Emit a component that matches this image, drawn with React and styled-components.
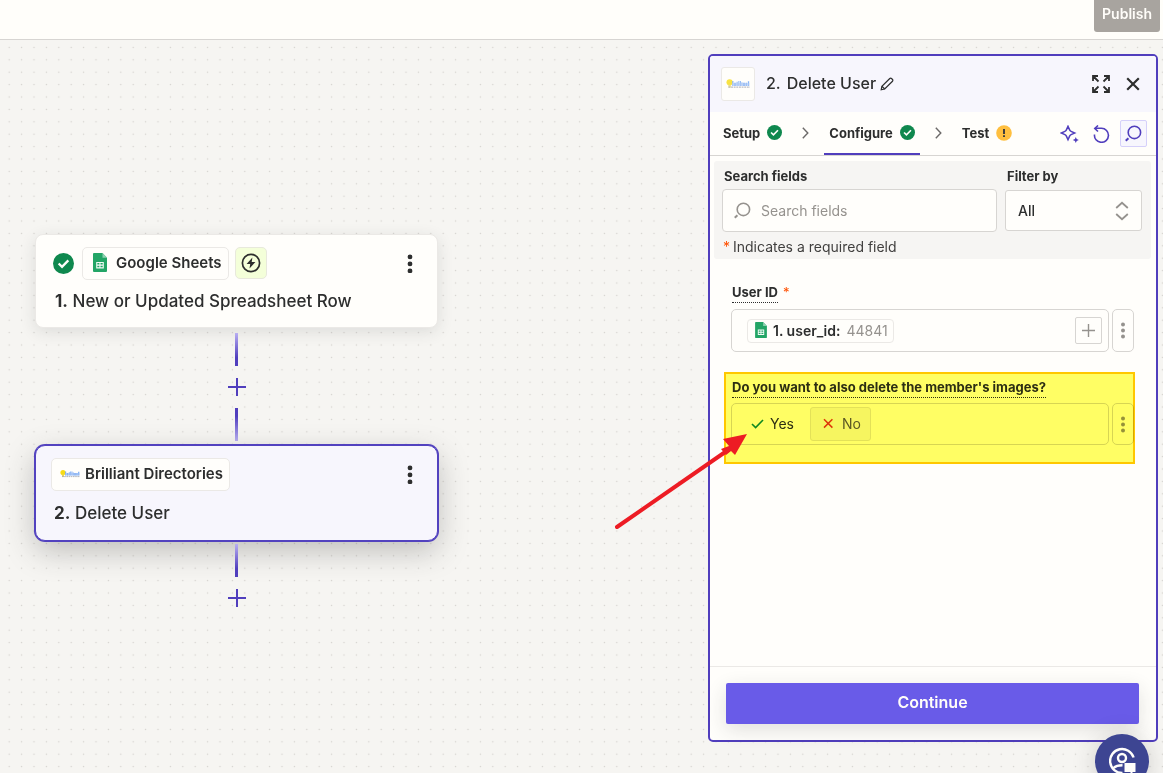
import styled, { createGlobalStyle, css } from 'styled-components'

const GlobalStyle = createGlobalStyle`
  * {
    box-sizing: border-box;
  }
  body {
    margin: 0;
    background: #f6f5f2;
    color: #2d2e2e;
    font-family: Inter, Arial, Helvetica, sans-serif;
    font-size: 14px;
  }
  button, input, select {
    font-family: inherit;
    color: inherit;
    margin: 0;
  }
`

const Page = styled.div`
  position: relative;
  display: flex;
  flex-direction: column;
  height: 100vh;
  min-height: 600px;
  overflow: hidden;
`

const TopBar = styled.header`
  position: relative;
  display: flex;
  justify-content: flex-end;
  align-items: flex-start;
  flex: none;
  height: 40px;
  padding-right: 3px;
  background: #fffefa;
  border-bottom: 1px solid #d7d5d2;
`

const PublishButton = styled.button`
  height: 32px;
  padding: 0 8px 5px;
  border: none;
  border-radius: 0 0 3px 3px;
  background: #a8a49f;
  color: #fffdf9;
  font-size: 14px;
  font-weight: 600;
`

const Dots = styled.svg`
  position: absolute;
  inset: 0;
  width: 100%;
  height: 100%;
`

const Canvas = styled.main`
  position: relative;
  display: flex;
  flex: 1;
  justify-content: space-between;
  min-height: 0;
  padding: 14px 5px 31px 35px;
`

const Flow = styled.section`
  display: flex;
  flex-direction: column;
  align-items: center;
  flex: 0 1 403px;
  padding-top: 180px;
`

const StepCard = styled.article`
  display: flex;
  flex-direction: column;
  gap: 8px;
  width: 100%;
  padding: 12px 15px 13px 16px;
  border: 1px solid #ebe9e6;
  border-radius: 8px;
  background: #fffefb;
  box-shadow: 0 4px 16px rgba(45, 46, 46, 0.12);
  ${({ $selected }) =>
    $selected &&
    css`
      gap: 9px;
      padding: 12px 15px 14px;
      border-color: #5242bf;
      border-radius: 10px;
      background: #f7f6fd;
      box-shadow: 0 0 0 1px #5242bf, 0 10px 30px rgba(45, 46, 46, 0.28);
    `}
`

const StepTop = styled.div`
  display: flex;
  align-items: center;
  gap: 6px;
`

const AppChip = styled.span`
  display: flex;
  align-items: center;
  gap: ${({ $gap }) => $gap}px;
  height: 33px;
  padding: 0 6px 2px ${({ $start }) => $start}px;
  border: 1px solid #ebe9e6;
  border-radius: 5px;
  background: #fffefb;
  font-size: 15px;
  font-weight: 600;
`

const TriggerChip = styled.span`
  display: grid;
  place-items: center;
  align-self: flex-start;
  width: 32px;
  height: 32px;
  border: 1px solid #e8e9dc;
  border-radius: 5px;
  background: #f4ffd9;
`

const StatusSlot = styled.span`
  display: flex;
  padding: 0 2px 0 1px;
`

const StepTitle = styled.h2`
  margin: 0;
  padding-left: 3px;
  font-size: 17px;
  font-weight: 500;
  line-height: 26px;
  b {
    font-weight: 700;
  }
`

const GhostButton = styled.button`
  display: grid;
  place-items: center;
  width: ${({ $size = 24 }) => $size}px;
  height: ${({ $size = 24 }) => $size}px;
  padding: 0;
  border: 1px solid ${({ $framed }) => ($framed ? '#d5d0fa' : 'transparent')};
  border-radius: 2px;
  background: ${({ $framed }) => ($framed ? '#f7f6fd' : 'none')};
  color: ${({ $accent }) => ($accent ? '#503ebd' : '#2d2e2e')};
`

const PushRight = styled.div`
  display: flex;
  align-items: center;
  gap: ${({ $gap = 0 }) => $gap}px;
  margin-left: auto;
`

const Line = styled.span`
  width: 3px;
  height: 33px;
  background: linear-gradient(
    ${({ $up }) => ($up ? 'to top' : 'to bottom')},
    #b9aff3,
    #503ebd 75%
  );
`

const Connector = styled.div`
  display: flex;
  flex-direction: column;
  align-items: center;
  gap: 9px;
  padding: ${({ $last }) => ($last ? '3px 0 0' : '5px 0 4px')};
`

const Panel = styled.aside`
  display: flex;
  flex-direction: column;
  flex: 0 0 450px;
  min-width: 0;
  border: 2px solid #503ebd;
  border-radius: 5px;
  background: #fffefb;
`

const PanelHeader = styled.header`
  display: flex;
  align-items: center;
  height: 56px;
  padding: 0 11px;
  border-radius: 3px 3px 0 0;
  background: #f7f6fd;
`

const LogoTile = styled.span`
  display: grid;
  place-items: center;
  width: 34px;
  height: 34px;
  margin-right: 11px;
  border: 1px solid #ebe9e6;
  border-radius: 3px;
  background: #fffefb;
`

const PanelTitle = styled.h1`
  display: flex;
  gap: 6px;
  margin: 0 4px 0 0;
  padding-bottom: 3px;
  font-size: 16px;
  font-weight: 500;
`

const Tabs = styled.nav`
  display: flex;
  align-items: stretch;
  height: 44px;
  padding: 0 9px 0 8px;
  border-bottom: 1px solid #d7d5d2;
`

const Tab = styled.button`
  display: flex;
  align-items: center;
  gap: 7px;
  padding: 0 5px 2px;
  border: none;
  background: none;
  font-size: 13px;
  font-weight: 700;
  box-shadow: ${({ $active }) => ($active ? 'inset 0 -2px #503ebd' : 'none')};
`

const TabArrow = styled.span`
  display: grid;
  place-items: center;
  width: 37px;
  padding-bottom: 2px;
`

const Filters = styled.section`
  display: grid;
  grid-template-columns: minmax(0, 1fr) 137px;
  column-gap: 8px;
  margin: 5px 5px 0 4px;
  padding: 4px 9px 0 8px;
  border-radius: 3px;
  background: #f6f5f3;
`

const FilterLabel = styled.label`
  padding: 0 0 2px 2px;
  font-size: 13px;
  font-weight: 700;
  line-height: 22px;
`

const SearchBox = styled.div`
  display: flex;
  align-items: center;
  gap: 10px;
  height: 43px;
  padding: 0 11px;
  border: 1px solid #d7d5d2;
  border-radius: 4px;
  background: #fffefb;
  color: #95928e;
`

const TextInput = styled.input`
  flex: 1;
  min-width: 0;
  height: 100%;
  padding: 0;
  border: none;
  outline: none;
  background: transparent;
  font-size: 14px;
  &::placeholder {
    color: #95928e;
    opacity: 1;
  }
`

const SelectBox = styled.div`
  display: grid;
  align-items: center;
  align-self: center;
  height: 41px;
  color: #95928e;
  > * {
    grid-area: 1 / 1;
  }
  > svg {
    justify-self: end;
    margin-right: 13px;
    pointer-events: none;
  }
`

const Select = styled.select`
  appearance: none;
  width: 100%;
  height: 100%;
  padding: 0 12px;
  border: 1px solid #d7d5d2;
  border-radius: 3px;
  background: #fffefb;
  color: #2d2e2e;
  font-size: 14px;
  font-weight: 500;
`

const Note = styled.p`
  grid-column: 1 / -1;
  margin: 0;
  padding: 3px 0 0 1px;
  color: #403f3e;
  font-size: 14px;
  line-height: 24px;
`

const Star = styled.span`
  color: #ff4f00;
  margin-right: ${({ $lead }) => ($lead ? 3 : 0)}px;
`

const Fields = styled.div`
  flex: 1;
  padding: 21px 22px 0 21px;
`

const Field = styled.div`
  position: relative;
  margin-bottom: 23px;
`

const FieldHead = styled.div`
  display: flex;
  gap: 5px;
  height: ${({ $short }) => ($short ? 28 : 29)}px;
  padding: 3px 0 0 1px;
  font-size: 13px;
  line-height: 18px;
`

const FieldLabel = styled.label`
  height: 20px;
  border-bottom: 1px dotted #2d2e2e;
  font-weight: 700;
`

const FieldRow = styled.div`
  display: flex;
  gap: 3px;
`

const FieldBox = styled.div`
  display: flex;
  align-items: center;
  flex: 1;
  min-width: 0;
  gap: ${({ $gap }) => $gap}px;
  height: ${({ $choices }) => ($choices ? 42 : 43)}px;
  padding: ${({ $choices }) => ($choices ? '0 8px' : '0 6px 0 15px')};
  border: 1px solid #d7d5d2;
  border-radius: 5px;
`

const Pill = styled.span`
  display: flex;
  align-items: center;
  flex: none;
  gap: 6px;
  height: 24px;
  padding: 0 5px 1px 7px;
  border: 1px solid #ebe9e6;
  border-radius: 4px;
  color: #95928e;
  font-size: 14px;
  b {
    color: #2d2e2e;
    font-weight: 600;
  }
`

const AddButton = styled.button`
  display: grid;
  place-items: center;
  flex: none;
  width: 27px;
  height: 27px;
  padding: 0;
  border: 1px solid #d7d5d2;
  border-radius: 2px;
  background: none;
  color: #95928e;
`

const MoreButton = styled.button`
  display: grid;
  place-items: center;
  flex: none;
  width: 22px;
  padding: 0;
  border: 1px solid #d7d5d2;
  border-radius: 5px;
  background: none;
  color: #95928e;
`

const Choice = styled.button`
  display: flex;
  align-items: center;
  gap: 6px;
  height: 34px;
  padding: 0 9px 1px;
  border: 1px solid ${({ $chosen }) => ($chosen ? '#e3e1dd' : 'transparent')};
  border-radius: 3px;
  background: ${({ $chosen }) => ($chosen ? '#f6f5f3' : 'none')};
  color: ${({ $chosen }) => ($chosen ? '#5c5958' : '#2d2e2e')};
  font-size: 14px;
`

const Highlight = styled.div`
  position: absolute;
  inset: -3px -1px -19px -7px;
  border: 2px solid #ffc800;
  background: #ffff65;
  mix-blend-mode: multiply;
  pointer-events: none;
`

const Pointer = styled.svg`
  position: absolute;
  left: -118px;
  top: 56px;
  pointer-events: none;
`

const PanelFooter = styled.footer`
  padding: 16px 17px 16px 16px;
  border-top: 1px solid #ebe9e6;
`

const ContinueButton = styled.button`
  width: 100%;
  height: 41px;
  padding: 0 0 3px;
  border: none;
  border-radius: 2px;
  background: #695be8;
  box-shadow: 0 6px 20px rgba(45, 46, 46, 0.14);
  color: #fffdf9;
  font-size: 16px;
  font-weight: 600;
`

const HelpButton = styled.button`
  position: absolute;
  right: 14px;
  bottom: -15px;
  display: grid;
  place-items: center;
  width: 54px;
  height: 54px;
  padding: 0;
  border: none;
  border-radius: 50%;
  background: #3d4592;
  box-shadow: 0 2px 24px rgba(45, 46, 46, 0.2);
  color: #fffefb;
`

function CheckBadge({ size = 15 }) {
  return (
    <svg width={size} height={size} viewBox="0 0 20 20" fill="none">
      <circle cx="10" cy="10" r="10" fill="#0f884e" />
      <path d="M5.4 10l3.2 3.2 6-6.2" stroke="#fffefb" strokeWidth="2.2" />
    </svg>
  )
}

function WarningBadge() {
  return (
    <svg width="16" height="16" viewBox="0 0 16 16">
      <circle cx="8" cy="8" r="7.8" fill="#ffbf3f" />
      <path d="M7 4h2v5H7zM7 10.2h2v1.8H7z" fill="#403f3e" />
    </svg>
  )
}

function SheetsIcon({ width, height }) {
  return (
    <svg width={width} height={height} viewBox="0 0 14 19">
      <path d="M1 0h8.5L14 4.7V18a1 1 0 0 1-1 1H1a1 1 0 0 1-1-1V1a1 1 0 0 1 1-1z" fill="#23a566" />
      <path d="M9.5 0L14 4.7H9.5z" fill="#8ed1b1" />
      <path
        d="M3.2 9h7.6v6.4H3.2zM4.3 10.1v1.5h2.1v-1.5zM7.5 10.1v1.5h2.2v-1.5zM4.3 12.7v1.6h2.1v-1.6zM7.5 12.7v1.6h2.2v-1.6z"
        fill="#f4fbf7"
        fillRule="evenodd"
      />
    </svg>
  )
}

function DirectoriesLogo({ width = 20, height = 8, soft }) {
  return (
    <svg width={width} height={height} viewBox="0 0 20 8" opacity={soft ? 0.8 : 1}>
      <circle cx="3" cy="2.6" r="2.6" fill="#f7dc15" />
      <path d="M2 4.5h2V7H2z" fill="#e6d565" />
      <path
        d="M5.2 1.6h1v4h-1zM6.8 3h1.4v2.6H6.8zM8.8 2.2h.9v3.4h-.9zM10.3 1.4h.8v4.2h-.8zM11.6 1.4h.8v4.2h-.8zM12.9 2.6h.8v3h-.8zM14.2 3h1.6v2.6h-1.6zM16.3 3h1.3v2.6h-1.3zM18.2 1.8h1.1v3.8h-1.1z"
        fill="#6aa2f5"
      />
      <path d="M5 3.2h14.5v2.2H5z" fill="#9dbdf2" opacity=".6" />
      <path d="M2 6.6h18" stroke="#a9abb3" strokeWidth=".9" strokeDasharray="1.6 .6" />
    </svg>
  )
}

function Kebab({ r = 2.4, gap = 7 }) {
  const height = gap * 2 + r * 2 + 1
  const mid = height / 2
  return (
    <svg width="6" height={height} fill="currentColor">
      <circle cx="3" cy={mid - gap} r={r} />
      <circle cx="3" cy={mid} r={r} />
      <circle cx="3" cy={mid + gap} r={r} />
    </svg>
  )
}

function BoltIcon() {
  return (
    <svg width="20" height="20" viewBox="0 0 20 20" fill="none">
      <circle cx="10" cy="10" r="8.6" stroke="#2d2e2e" strokeWidth="1.7" />
      <path d="M11.4 4.6L5.6 11h3.6l-.7 4.4 5.9-6.4h-3.7z" fill="#2d2e2e" />
    </svg>
  )
}

function Plus({ size, weight }) {
  const mid = size / 2
  return (
    <svg width={size} height={size} stroke="currentColor" strokeWidth={weight}>
      <path d={`M${mid} 0V${size}M0 ${mid}H${size}`} />
    </svg>
  )
}

function PencilIcon() {
  return (
    <svg width="14" height="14" viewBox="0 0 14 14" fill="none" stroke="#2d2e2e" strokeWidth="1.2">
      <path d="M1.2 12.8l.7-3.5L9.8 1.5a1.2 1.2 0 0 1 1.7 0l1 1a1.2 1.2 0 0 1 0 1.7L4.7 12z" />
      <path d="M1.9 9.3L4.7 12" />
    </svg>
  )
}

function ExpandIcon() {
  return (
    <svg width="18" height="18" viewBox="0 0 18 18" fill="none" stroke="#2d2e2e" strokeWidth="1.8">
      <path d="M1 6V1h5M1 1l5.5 5.5M12 1h5v5M17 1l-5.5 5.5M1 12v5h5M1 17l5.5-5.5M12 17h5v-5M17 17l-5.5-5.5" />
    </svg>
  )
}

function CloseIcon() {
  return (
    <svg width="14" height="14" viewBox="0 0 14 14" stroke="#2d2e2e" strokeWidth="2.2">
      <path d="M1.2 1.2l11.6 11.6M12.8 1.2L1.2 12.8" />
    </svg>
  )
}

function ChevronRight() {
  return (
    <svg width="7" height="12" viewBox="0 0 7 12" fill="none" stroke="#6b6968" strokeWidth="1.4">
      <path d="M.8 .8L5.8 6l-5 5.2" />
    </svg>
  )
}

function SparkleIcon() {
  return (
    <svg width="19" height="18" viewBox="0 0 19 18" fill="none">
      <path
        d="M8 1.3l1.6 3.6a3 3 0 0 0 1.5 1.5L14.7 8l-3.6 1.6a3 3 0 0 0-1.5 1.5L8 14.7l-1.6-3.6a3 3 0 0 0-1.5-1.5L1.3 8l3.6-1.6a3 3 0 0 0 1.5-1.5z"
        stroke="currentColor"
        strokeWidth="1.5"
      />
      <path d="M15.8 12l.9 2.1 2.1.9-2.1.9-.9 2.1-.9-2.1-2.1-.9 2.1-.9z" fill="currentColor" />
    </svg>
  )
}

function UndoIcon() {
  return (
    <svg width="17" height="18" viewBox="0 0 17 18" fill="none" stroke="currentColor" strokeWidth="1.6">
      <path d="M1.5 9.5a7 7 0 1 0 7-6.2H1.8" />
      <path d="M5 .5L1.8 3.5 5 6.5" />
    </svg>
  )
}

function SearchIcon() {
  return (
    <svg width="17" height="17" viewBox="0 0 17 17" fill="none" stroke="currentColor" strokeWidth="1.6">
      <circle cx="9.4" cy="7.4" r="6.2" />
      <path d="M3.4 13.2L.8 15.8" strokeWidth="2" />
    </svg>
  )
}

function SortIcon() {
  return (
    <svg width="14" height="20" viewBox="0 0 14 20" fill="none" stroke="currentColor" strokeWidth="1.8">
      <path d="M1.2 7L7 1.8 12.8 7M1.2 13L7 18.2 12.8 13" />
    </svg>
  )
}

function HelpIcon() {
  return (
    <svg width="27" height="28" viewBox="0 0 27 28" fill="none" stroke="currentColor" strokeWidth="2.4">
      <path d="M24.6 10.5A12 12 0 1 0 13.5 26" />
      <circle cx="13" cy="11" r="4" />
      <path d="M4.5 21c2-2 4-2.8 9-2.8" />
      <path d="M15.5 16h11v9H24l-2.5 2.6V25h-6z" fill="currentColor" stroke="none" />
    </svg>
  )
}

export default function App() {
  return (
    <Page>
      <GlobalStyle />
      <Dots aria-hidden="true">
        <pattern id="dots" x="3" y="4" width="12.4" height="12.4" patternUnits="userSpaceOnUse">
          <circle cx="6.2" cy="6.2" r="0.7" fill="#d3d0cc" />
        </pattern>
        <rect width="100%" height="100%" fill="url(#dots)" />
      </Dots>
      <TopBar>
        <PublishButton type="button">Publish</PublishButton>
      </TopBar>
      <Canvas>
        <Flow>
          <StepCard>
            <StepTop>
              <StatusSlot>
                <CheckBadge size={21} />
              </StatusSlot>
              <AppChip $gap={9} $start={10}>
                <SheetsIcon width={14} height={19} />
                Google Sheets
              </AppChip>
              <TriggerChip>
                <BoltIcon />
              </TriggerChip>
              <PushRight>
                <GhostButton type="button" aria-label="Step 1 options">
                  <Kebab />
                </GhostButton>
              </PushRight>
            </StepTop>
            <StepTitle>
              <b>1.</b> New or Updated Spreadsheet Row
            </StepTitle>
          </StepCard>
          <Connector>
            <Line />
            <GhostButton type="button" $accent aria-label="Add a step here">
              <Plus size={18} weight={2} />
            </GhostButton>
            <Line $up />
          </Connector>
          <StepCard $selected>
            <StepTop>
              <AppChip $gap={5} $start={8}>
                <DirectoriesLogo />
                Brilliant Directories
              </AppChip>
              <PushRight>
                <GhostButton type="button" aria-label="Step 2 options">
                  <Kebab />
                </GhostButton>
              </PushRight>
            </StepTop>
            <StepTitle>
              <b>2.</b> Delete User
            </StepTitle>
          </StepCard>
          <Connector $last>
            <Line />
            <GhostButton type="button" $accent aria-label="Add a last step">
              <Plus size={18} weight={2} />
            </GhostButton>
          </Connector>
        </Flow>

        <Panel>
          <PanelHeader>
            <LogoTile>
              <DirectoriesLogo width={24} height={10} soft />
            </LogoTile>
            <PanelTitle>
              <span>2.</span>
              <span>Delete User</span>
            </PanelTitle>
            <PencilIcon />
            <PushRight $gap={8}>
              <GhostButton type="button" aria-label="Expand">
                <ExpandIcon />
              </GhostButton>
              <GhostButton type="button" aria-label="Close">
                <CloseIcon />
              </GhostButton>
            </PushRight>
          </PanelHeader>
          <Tabs>
            <Tab type="button">
              Setup <CheckBadge />
            </Tab>
            <TabArrow>
              <ChevronRight />
            </TabArrow>
            <Tab type="button" $active>
              Configure <CheckBadge />
            </Tab>
            <TabArrow>
              <ChevronRight />
            </TabArrow>
            <Tab type="button">
              Test <WarningBadge />
            </Tab>
            <PushRight $gap={5}>
              <GhostButton type="button" $accent $size={27} aria-label="Ask AI">
                <SparkleIcon />
              </GhostButton>
              <GhostButton type="button" $accent $size={27} aria-label="Undo">
                <UndoIcon />
              </GhostButton>
              <GhostButton type="button" $accent $framed $size={27} aria-label="Search">
                <SearchIcon />
              </GhostButton>
            </PushRight>
          </Tabs>

          <Filters>
            <FilterLabel htmlFor="search-fields">Search fields</FilterLabel>
            <FilterLabel htmlFor="filter-by">Filter by</FilterLabel>
            <SearchBox>
              <SearchIcon />
              <TextInput id="search-fields" placeholder="Search fields" />
            </SearchBox>
            <SelectBox>
              <Select id="filter-by" defaultValue="all">
                <option value="all">All</option>
              </Select>
              <SortIcon />
            </SelectBox>
            <Note>
              <Star $lead>*</Star>
              Indicates a required field
            </Note>
          </Filters>

          <Fields>
            <Field>
              <FieldHead>
                <FieldLabel htmlFor="user-id">User ID</FieldLabel>
                <Star>*</Star>
              </FieldHead>
              <FieldRow>
                <FieldBox>
                  <Pill>
                    <SheetsIcon width={12} height={16} />
                    <b>1. user_id:</b>
                    44841
                  </Pill>
                  <TextInput id="user-id" />
                  <AddButton type="button" aria-label="Insert data">
                    <Plus size={13} weight={1.4} />
                  </AddButton>
                </FieldBox>
                <MoreButton type="button" aria-label="User ID options">
                  <Kebab r={2} gap={6} />
                </MoreButton>
              </FieldRow>
            </Field>
            <Field>
              <FieldHead $short>
                <FieldLabel as="span" id="delete-images">
                  Do you want to also delete the member's images?
                </FieldLabel>
              </FieldHead>
              <FieldRow>
                <FieldBox $choices $gap={6} role="group" aria-labelledby="delete-images">
                  <Choice type="button">
                    <svg width="14" height="13" viewBox="0 0 14 13" fill="none" stroke="#0f884e" strokeWidth="1.6">
                      <path d="M2 7l3.6 3.6L13 3" />
                    </svg>
                    Yes
                  </Choice>
                  <Choice type="button" $chosen aria-pressed="true">
                    <svg width="16" height="13" viewBox="0 0 16 13" stroke="#dd3512" strokeWidth="1.5">
                      <path d="M4 2.2l8.4 8.4M12.4 2.2L4 10.6" />
                    </svg>
                    No
                  </Choice>
                </FieldBox>
                <MoreButton type="button" aria-label="Delete images options">
                  <Kebab r={2} gap={6} />
                </MoreButton>
              </FieldRow>
              <Highlight />
              <Pointer width="136" height="100" viewBox="0 0 136 100" aria-hidden="true">
                <path d="M4 96L118 17" stroke="#ed1c24" strokeWidth="4" strokeLinecap="round" />
                <path d="M134 3L110 8 116 15 108 18 113 24 118 20 122 24z" fill="#ed1c24" />
              </Pointer>
            </Field>
          </Fields>

          <PanelFooter>
            <ContinueButton type="button">Continue</ContinueButton>
          </PanelFooter>
        </Panel>
      </Canvas>
      <HelpButton type="button" aria-label="Help">
        <HelpIcon />
      </HelpButton>
    </Page>
  )
}
